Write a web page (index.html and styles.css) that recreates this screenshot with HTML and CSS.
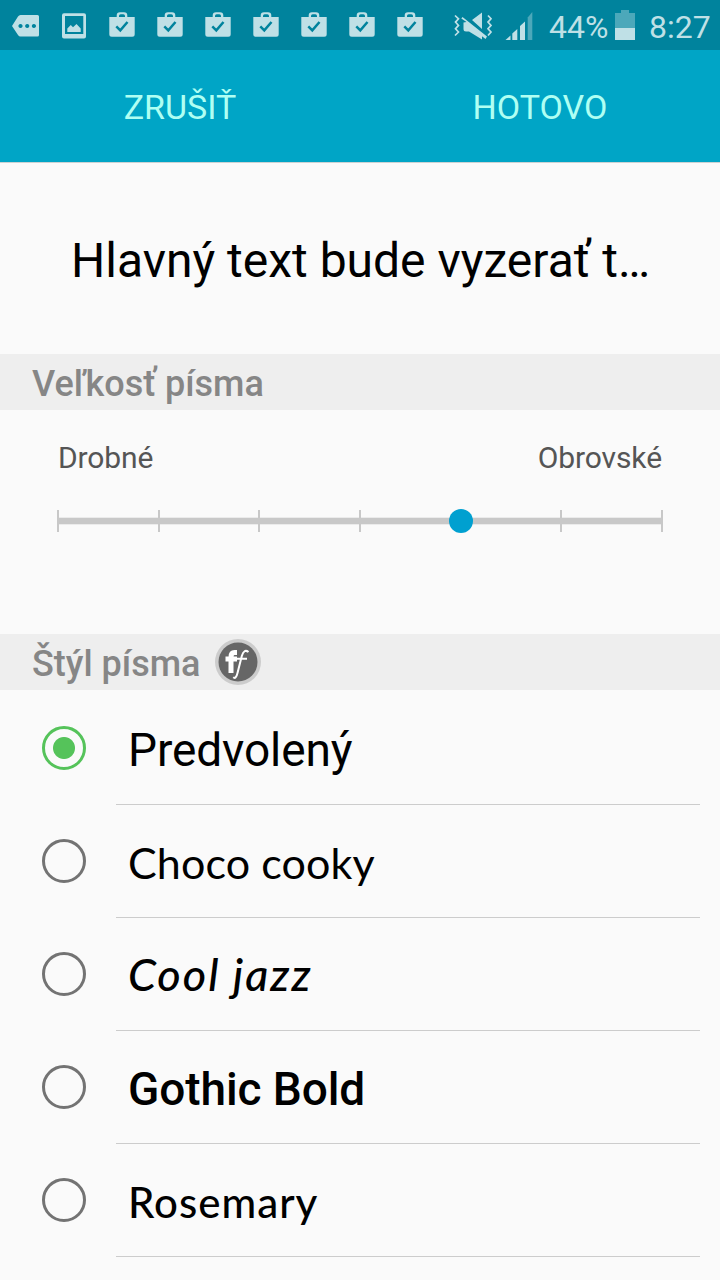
FILE: index.html
```html
<!DOCTYPE html>
<html lang="sk">
<head>
<meta charset="utf-8">
<title>Písmo</title>
<link rel="stylesheet" href="styles.css">
</head>
<body>
<svg class="defs" width="0" height="0" aria-hidden="true">
  <symbol id="bag" viewBox="0 0 26 26">
    <path fill-rule="evenodd" d="M7.700 5V3.500Q7.700 .2 11 .2h4Q18.300 .2 18.300 3.500V5H25.700v17.200Q25.700 24.700 23.200 24.700H2.800Q.3 24.700 .3 22.200V5ZM10 5H16V4Q16 2.300 14.300 2.300H11.700Q10 2.300 10 4Z"/>
    <path class="cut" d="M7.300 14.300l4 4 7.200-8.300"/>
  </symbol>
</svg>
<header class="status">
  <div class="notices">
    <svg class="icon" viewBox="0 0 28 26"><path fill-rule="evenodd" d="M8.500 3H25.500Q27 3 27 4.500V23Q27 24.500 25.500 24.500H8.500Q7 24.500 6 23L0 14 6 4.500Q7 3 8.500 3ZM8.500 11.900a2.100 2.100 0 1 0 .01 0ZM15.200 11.900a2.100 2.100 0 1 0 .01 0ZM21.900 11.900a2.100 2.100 0 1 0 .01 0Z"/></svg>
    <svg class="icon photo" viewBox="0 0 24 26"><path fill-rule="evenodd" d="M2 .3H22Q24 .3 24 2.300V23.500Q24 25.500 22 25.500H2Q0 25.500 0 23.500V2.300Q0 .3 2 .3ZM3 3V21H21.300V3ZM5.300 19V15.500L8.800 12 11 14.300 14.500 11 18.700 15.500V19Z"/></svg>
    <svg class="icon bag"><use href="#bag"/></svg>
    <svg class="icon bag"><use href="#bag"/></svg>
    <svg class="icon bag"><use href="#bag"/></svg>
    <svg class="icon bag"><use href="#bag"/></svg>
    <svg class="icon bag"><use href="#bag"/></svg>
    <svg class="icon bag"><use href="#bag"/></svg>
    <svg class="icon bag"><use href="#bag"/></svg>
  </div>
  <div class="system">
    <svg class="mute" viewBox="0 0 40 30"><path d="M18 8L28 .5V17ZM8.500 5L33 24.500 31.500 27 28 24.300V27.500L15 19.500H12Q9.500 19.500 9.500 17V10.500L12.500 10 7.300 6.500Z"/><path class="wave" d="M1 3.500l3.500 3.300-3 3.300 3 3.300-3 3.300 3 3.300L1 23.500M34 3.500l3 3.300-3 3.300 3 3.300-3 3.300 3 3.300-3 3.500"/></svg>
    <svg class="signal" viewBox="0 0 28 28"><path d="M.500 28L5.500 23.500V28ZM7.300 21.500L12.300 17V28H7.300ZM15 14L20 9.500V28H15Z"/><path class="dim" d="M22.700 5.500L27.300 0V28H22.700Z"/></svg>
    <span class="percent">44%</span>
    <svg class="battery" viewBox="0 0 20 30"><path class="dim" d="M0 3H6V0H14V3H20V18H0Z"/><path d="M0 18H20V30H0Z"/></svg>
    <span class="clock">8:27</span>
  </div>
</header>
<nav class="actions">
  <span class="cancel">ZRUŠIŤ</span>
  <span class="done">HOTOVO</span>
</nav>
<main>
  <h1 class="preview">Hlavný text bude vyzerať t…</h1>
  <h2 class="section">Veľkosť písma</h2>
  <section class="size">
    <div class="labels"><span>Drobné</span><span>Obrovské</span></div>
    <svg class="slider" viewBox="0 0 606 28"><path class="edge" d="M1 10H605V18H1Z"/><path class="track" d="M1 11H605V17H1Z"/><path class="ticks" d="M1 3V25M102 3V25M202 3V25M303 3V25M504 3V25M605 3V25"/><circle cx="404" cy="14" r="12"/></svg>
  </section>
  <h2 class="section style-title"><span>Štýl písma</span>
    <svg class="flip" viewBox="0 0 46 46"><circle class="rim" cx="23" cy="23" r="23"/><circle class="disc" cx="23" cy="23" r="19.500"/><path class="f-bold" d="M22 13.500H19.500Q16 13.500 16 18V34M10.500 20H22"/><path class="f-thin" d="M33.500 13Q29 9.500 26.800 17L22.500 34Q21 40.500 18.200 38.300M21 19.700H32"/></svg>
  </h2>
  <ul class="styles">
    <li><i class="radio on"></i><span class="name">Predvolený</span></li>
    <li><i class="radio"></i><span class="name choco">Choco cooky</span></li>
    <li><i class="radio"></i><span class="name jazz">Cool jazz</span></li>
    <li><i class="radio"></i><span class="name gothic">Gothic Bold</span></li>
    <li><i class="radio"></i><span class="name rosemary">Rosemary</span></li>
  </ul>
</main>
</body>
</html>
```
FILE: styles.css
```css
* { box-sizing: border-box; }
body { margin: 0; width: 720px; height: 1280px; overflow: hidden; background: #fafafa; color: #000; font-family: Roboto, sans-serif; }
h1, h2, ul { margin: 0; padding: 0; font-weight: 400; }
svg { display: block; flex: none; }
.defs { position: absolute; }
.status { height: 50px; background: #00839d; display: flex; justify-content: space-between; fill: #bfe0e6; color: #bfe0e6; }
.notices { display: flex; padding: 12px 0 0 12px; }
.icon { width: 28px; height: 26px; margin-right: 22px; }
.photo { width: 24px; margin-top: 1px; margin-right: 23px; }
.bag { width: 26px; margin-right: 22px; }
.cut { fill: none; stroke: #00839d; stroke-width: 2.5; }
.system { display: flex; padding-right: 11px; font-size: 32px; line-height: 38px; }
.mute { width: 40px; height: 30px; margin: 12px 11px 0 0; }
.wave { fill: none; stroke: #bfe0e6; stroke-width: 1.7; }
.signal { width: 28px; height: 28px; margin: 12px 16px 0 0; }
.dim { fill: #4ca8ba; }
.percent, .clock { padding-top: 8px; white-space: nowrap; }
.percent { width: 66px; }
.battery { width: 20px; height: 30px; margin: 10px 14px 0 0; }
.clock { width: 60px; }
.actions { height: 113px; background: #00a5c6; border-bottom: 1px solid #ccd2d3; display: grid; grid-template-columns: 1fr 1fr; text-align: center; font-size: 34px; line-height: 114px; color: #affff3; }
.preview { height: 191px; padding: 69px 0 0 71px; font-size: 48px; line-height: 58px; white-space: nowrap; }
.section { height: 56px; padding-left: 32px; background: #eee; color: #868686; font-size: 36px; font-weight: 500; line-height: 60px; }
.size { height: 224px; padding: 28px 57px 0; color: #555; }
.labels { display: flex; justify-content: space-between; padding: 0 1px; font-size: 30px; letter-spacing: -.1px; line-height: 40px; }
.slider { width: 606px; height: 28px; margin-top: 29px; }
.edge { fill: #ebebeb; }
.track { fill: #c8c8c8; }
.ticks { stroke: #c8c8c8; stroke-width: 2; }
.slider circle { fill: #00a0d0; }
.style-title { display: flex; gap: 15px; }
.flip { width: 46px; height: 46px; margin-top: 5px; }
.rim { fill: #ccc; }
.disc { fill: #666; }
.f-bold, .f-thin { fill: none; stroke: #fff; }
.f-bold { stroke-width: 5; }
.f-thin { stroke-width: 2; }
.styles { list-style: none; padding: 2px 20px 0 0; }
.styles li { height: 113px; display: flex; align-items: center; padding-left: 42px; }
.radio { width: 44px; height: 44px; flex: none; border: 3px solid #737373; border-radius: 50%; margin: 0 30px 2px 0; }
.radio.on { border-color: #55c35a; background: radial-gradient(circle, #55c35a 10.500px, transparent 11.500px); }
.name { flex: 1; height: 113px; padding-left: 12px; border-bottom: 1px solid #ccc; font-size: 46px; letter-spacing: -.1px; line-height: 116px; white-space: nowrap; }
.choco, .jazz, .rosemary { font-family: Lato, sans-serif; }
.choco { font-size: 43px; letter-spacing: .1px; }
.jazz { font-size: 45px; font-style: italic; font-weight: 500; letter-spacing: 2px; line-height: 112px; }
.gothic { font-weight: 500; }
.rosemary { font-size: 42px; font-weight: 500; letter-spacing: 1px; }
```
